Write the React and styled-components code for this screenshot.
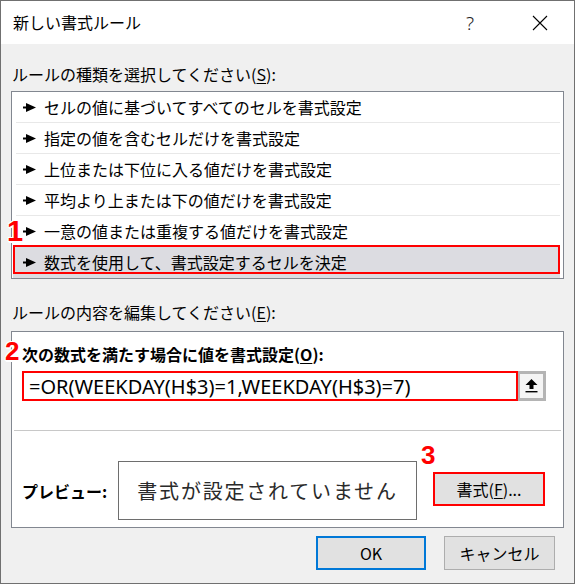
import React from 'react';
import styled, { createGlobalStyle } from 'styled-components';

const GlobalStyle = createGlobalStyle`
	body {
		margin: 0;
		background: #ffffff;
		font-family: 'Noto Sans CJK JP', 'Noto Sans', sans-serif;
		color: #000;
	}
`;

const ruleTypes = [
	'セルの値に基づいてすべてのセルを書式設定',
	'指定の値を含むセルだけを書式設定',
	'上位または下位に入る値だけを書式設定',
	'平均より上または下の値だけを書式設定',
	'一意の値または重複する値だけを書式設定',
	'数式を使用して、書式設定するセルを決定',
];

const Pointer = () => (
	<svg width="14" height="9" viewBox="0 0 14 9">
		<rect x="0" y="3.5" width="5" height="2" fill="#000" />
		<polygon points="3,0 13,4.5 3,9" fill="#000" />
	</svg>
);

const UploadIcon = () => (
	<svg width="13" height="14" viewBox="0 0 13 14">
		<polygon points="0.5,6 6.5,0 12.5,6 8.5,6 8.5,10 4.5,10 4.5,6" fill="#000" />
		<rect x="0.5" y="12" width="12" height="1.4" fill="#000" />
	</svg>
);

const CloseIcon = () => (
	<svg width="16" height="16" viewBox="0 0 16 16">
		<path d="M1 1 L15 15 M15 1 L1 15" stroke="#000" strokeWidth="1.1" />
	</svg>
);

const App = () => {
	return (
		<>
			<GlobalStyle />
			<Dialog>
				<TitleBar>
					<Title>新しい書式ルール</Title>
					<Help>?</Help>
					<CloseButton>
						<CloseIcon />
					</CloseButton>
				</TitleBar>
				<Body>
					<SectionLabel>
						ルールの種類を選択してください(<u>S</u>):
					</SectionLabel>
					<ListBox>
						{ruleTypes.map((t, i) => (
							<ListRow key={t} selected={i === ruleTypes.length - 1}>
								{i === 4 && <Marker $left={-9} $top={1} $size={29}>1</Marker>}
								<Pointer />
								<span>{t}</span>
							</ListRow>
						))}
					</ListBox>
					<SectionLabel $gap={23}>
						ルールの内容を編集してください(<u>E</u>):
					</SectionLabel>
					<Panel>
						<Marker $left={-7} $top={6}>2</Marker>
						<Marker $left={409} $top={110}>3</Marker>
						<BoldLabel>
							次の数式を満たす場合に値を書式設定(<u>O</u>):
						</BoldLabel>
						<FormulaRow>
							<FormulaInput>=OR(WEEKDAY(H$3)=1,WEEKDAY(H$3)=7)</FormulaInput>
							<CollapseButton>
								<UploadIcon />
							</CollapseButton>
						</FormulaRow>
						<Divider />
						<PreviewRow>
							<BoldLabel as="span">プレビュー:</BoldLabel>
							<PreviewBox>書式が設定されていません</PreviewBox>
							<FormatButton>
								書式(<u>F</u>)...
							</FormatButton>
						</PreviewRow>
					</Panel>
					<Footer>
						<DialogButton primary>OK</DialogButton>
						<DialogButton>キャンセル</DialogButton>
					</Footer>
				</Body>
			</Dialog>
		</>
	);
};

const Dialog = styled.div`
	width: 575px;
	height: 584px;
	box-sizing: border-box;
	border: 1px solid #707070;
	display: flex;
	flex-direction: column;
	background: #f0f0f0;
`;

const TitleBar = styled.div`
	height: 43px;
	background: #ffffff;
	display: flex;
	align-items: center;
	padding-left: 12px;
	flex-shrink: 0;
`;

const Title = styled.div`
	flex: 1;
	font-size: 16px;
	color: #000;
	margin-top: -1px;
`;

const Help = styled.div`
	font-family: 'Noto Sans', sans-serif;
	font-size: 19px;
	font-weight: 300;
	color: #222;
	margin-right: 58px;
`;

const CloseButton = styled.div`
	display: flex;
	align-items: center;
	margin-right: 26px;
	margin-top: 1px;
`;

const Body = styled.div`
	flex: 1;
	display: flex;
	flex-direction: column;
	padding: 0 10px;
`;

const SectionLabel = styled.div`
	font-size: 16px;
	line-height: 20px;
	margin-top: ${(p) => p.$gap || 20}px;
	padding-left: 1px;
	u {
		text-underline-offset: 2px;
	}
`;

const ListBox = styled.div`
	margin-top: 7px;
	height: 188px;
	box-sizing: border-box;
	border: 1px solid #828790;
	background: #ffffff;
	padding: 0 3px 0 1px;
	position: relative;
`;

const ListRow = styled.div`
	position: relative;
	height: 31px;
	box-sizing: border-box;
	display: flex;
	align-items: center;
	gap: 7px;
	padding-left: ${(p) => (p.selected ? 10 : 7)}px;
	font-size: 16px;
	border-bottom: 1px solid ${(p) => (p.selected ? 'transparent' : '#e8e8e8')};
	margin-left: ${(p) => (p.selected ? 0 : 3)}px;
	background: ${(p) => (p.selected ? '#dcdce1' : 'transparent')};
	${(p) =>
		p.selected &&
		`
		&::after {
			content: '';
			position: absolute;
			left: 0;
			right: 0;
			top: -2px;
			bottom: 3px;
			border: 2px solid #ff0000;
		}
	`}
	span {
		margin-top: -1px;
	}
`;

const Marker = styled.div`
	position: absolute;
	left: ${(p) => p.$left}px;
	top: ${(p) => p.$top}px;
	z-index: 2;
	font-family: 'Liberation Sans', sans-serif;
	font-weight: 700;
	font-size: ${(p) => p.$size || 26}px;
	line-height: 1;
	color: #ff0000;
	text-shadow: -1px -1px 0 #fff, 1px -1px 0 #fff, -1px 1px 0 #fff, 1px 1px 0 #fff,
		0 2px 0 #fff, 2px 0 0 #fff;
`;

const Panel = styled.div`
	position: relative;
	margin-top: 9px;
	height: 197px;
	box-sizing: border-box;
	border: 1px solid #828790;
	background: #ffffff;
	padding: 12px 2px 0 10px;
	display: flex;
	flex-direction: column;
`;

const BoldLabel = styled.div`
	font-size: 16px;
	font-weight: 700;
	line-height: 20px;
	u {
		text-underline-offset: 2px;
	}
`;

const FormulaRow = styled.div`
	display: flex;
	margin-top: 7px;
	height: 30px;
`;

const FormulaInput = styled.div`
	width: 496px;
	box-sizing: border-box;
	border: 2px solid #ff0000;
	display: flex;
	align-items: center;
	padding-left: 5px;
	font-family: 'Noto Sans', sans-serif;
	font-size: 20px;
	color: #000;
`;

const CollapseButton = styled.div`
	width: 28px;
	box-sizing: border-box;
	border: 3px solid #b4b4b4;
	border-left-width: 2px;
	background: #f4f4f4;
	display: flex;
	align-items: center;
	justify-content: center;
`;

const Divider = styled.div`
	height: 1px;
	background: #c8c8c8;
	margin: 29px 0 0 -8px;
`;

const PreviewRow = styled.div`
	display: flex;
	align-items: center;
	margin-top: 30px;
	& > span {
		width: 96px;
	}
`;

const PreviewBox = styled.div`
	width: 299px;
	height: 59px;
	box-sizing: border-box;
	border: 1px solid #6e6e6e;
	display: flex;
	align-items: center;
	justify-content: center;
	font-size: 20px;
	letter-spacing: 1.8px;
	color: #2a2a2a;
`;

const FormatButton = styled.div`
	margin-left: 16px;
	width: 112px;
	height: 34px;
	box-sizing: border-box;
	border: 2px solid #ff0000;
	background: #e1e1e1;
	display: flex;
	align-items: center;
	justify-content: center;
	font-size: 16px;
	margin-top: -4px;
	u {
		text-underline-offset: 2px;
	}
`;

const Footer = styled.div`
	display: flex;
	justify-content: flex-end;
	gap: 18px;
	margin-top: 8px;
	padding-right: 9px;
`;

const DialogButton = styled.div`
	width: ${(p) => (p.primary ? 110 : 111)}px;
	height: 34px;
	box-sizing: border-box;
	border: ${(p) => (p.primary ? '2px solid #0078d7' : '1px solid #adadad')};
	background: #e1e1e1;
	display: flex;
	align-items: center;
	justify-content: center;
	font-size: 16px;
`;

export default App;
